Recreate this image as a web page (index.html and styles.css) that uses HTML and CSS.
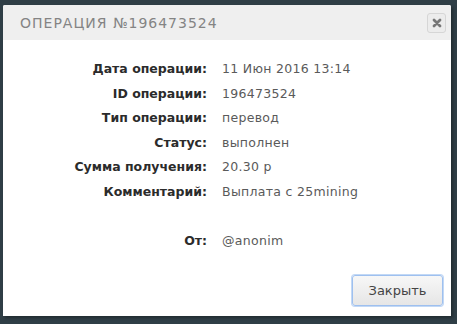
FILE: index.html
```html
<!DOCTYPE html>
<html lang="ru">
<head>
<meta charset="utf-8">
<link rel="stylesheet" href="styles.css">
</head>
<body>
<div class="dialog">
  <div class="header">
    <span class="title">ОПЕРАЦИЯ №196473524</span>
    <span class="close"><svg width="10" height="10" viewBox="0 0 10 10"><path d="M2 2 L8 8 M8 2 L2 8" stroke="#777" stroke-width="2.8" stroke-linecap="round"/></svg></span>
  </div>
  <div class="body">
    <div class="grid">
      <div class="label">Дата операции:</div><div class="value">11 Июн 2016 13:14</div>
      <div class="label">ID операции:</div><div class="value">196473524</div>
      <div class="label">Тип операции:</div><div class="value">перевод</div>
      <div class="label">Статус:</div><div class="value">выполнен</div>
      <div class="label">Сумма получения:</div><div class="value">20.30 р</div>
      <div class="label">Комментарий:</div><div class="value">Выплата с 25mining</div>
      <div class="label"></div><div class="value"></div>
      <div class="label">От:</div><div class="value">@anonim</div>
    </div>
  </div>
  <div class="footer">
    <button class="btn">Закрыть</button>
  </div>
</div>
</body>
</html>
```
FILE: styles.css
```css
html, body {
  margin: 0;
  padding: 0;
  background: #2f3e46;
  width: 457px;
  height: 324px;
  overflow: hidden;
}
body {
  padding: 5px 0 0 3px;
  box-sizing: border-box;
  font-family: "DejaVu Sans", sans-serif;
}
.dialog {
  width: 448px;
  height: 311px;
  background: #fff;
  box-shadow: 2px 2px 3px rgba(0,0,0,0.3);
  display: flex;
  flex-direction: column;
  border-radius: 2px 2px 0 0;
}
.header {
  height: 35px;
  background: #efefef;
  display: flex;
  align-items: center;
  justify-content: space-between;
  padding: 1px 5px 0 17px;
  box-sizing: border-box;
  border-radius: 2px 2px 0 0;
}
.title {
  font-size: 14px;
  letter-spacing: 1px;
  color: #848484;
}
.close {
  width: 17px;
  height: 18px;
  border: 1px solid #d6d6d6;
  border-radius: 3px;
  background: #ececec;
  display: flex;
  align-items: center;
  justify-content: center;
}
.body {
  flex: 1;
  padding: 21px 0 0 0;
}
.grid {
  display: grid;
  grid-template-columns: 204px auto;
  column-gap: 15px;
  grid-auto-rows: 24.5px;
  font-size: 12.5px;
  color: #333;
}
.label {
  text-align: right;
  font-weight: bold;
  color: #2b2b2b;
}
.value {
  color: #5a5a5a;
  letter-spacing: 0.3px;
}
.footer {
  display: flex;
  justify-content: flex-end;
  padding: 0 8px 10px 0;
}
.btn {
  width: 91px;
  height: 31px;
  border: 1px solid #9ec0ef;
  border-radius: 3px;
  background: linear-gradient(#f7f7f7, #e6e6e6);
  font-family: "DejaVu Sans", sans-serif;
  font-size: 13px;
  color: #444;
  box-shadow: 0 0 0 1px #c2d8f5;
}
```
